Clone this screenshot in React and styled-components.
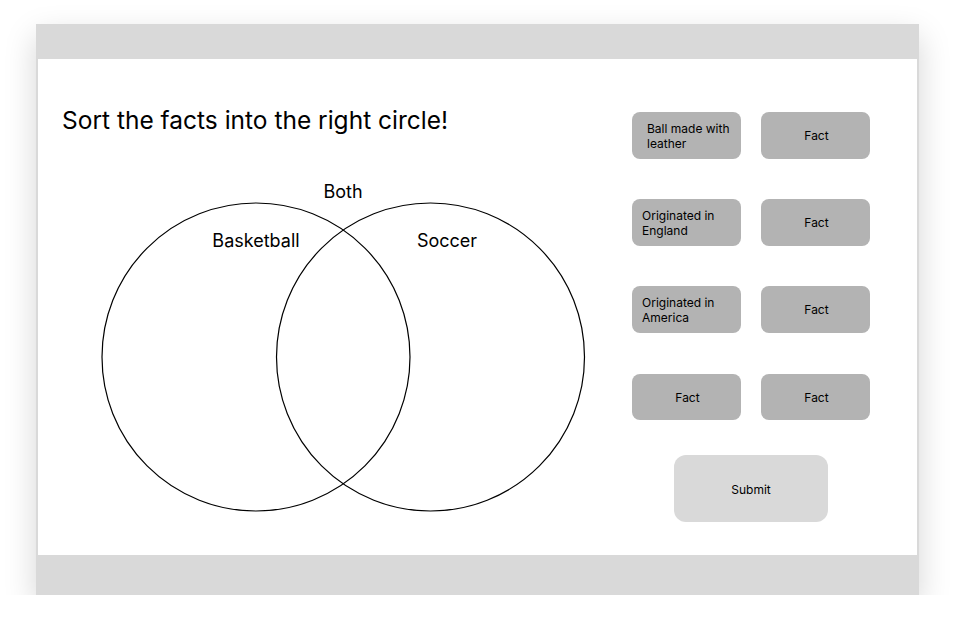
import React from 'react';
import styled, { createGlobalStyle } from 'styled-components';

const GlobalStyle = createGlobalStyle`
  body {
    margin: 0;
    background: #ffffff;
    font-family: Inter, "Noto Sans", "Liberation Sans", sans-serif;
    color: #000;
  }
`;

const Frame = styled.div`
  width: 883px;
  margin: 24px 0 0 36px;
  background: #d9d9d9;
  box-shadow: 0 12px 30px rgba(0, 0, 0, 0.17);
  display: flex;
  flex-direction: column;
`;

const Bar = styled.div`
  height: ${(p) => p.$h}px;
  background: #d9d9d9;
`;

const Main = styled.div`
  height: 496px;
  margin: 0 2px;
  background: #ffffff;
  display: flex;
`;

const LeftCol = styled.div`
  flex: 1;
  padding: 47px 0 0 24px;
  display: flex;
  flex-direction: column;
`;

const Title = styled.h1`
  margin: 0;
  font-size: 24.5px;
  font-weight: 400;
  line-height: 29px;
`;

const Venn = styled.svg`
  display: block;
  margin: 37px 0 0 36px;
  overflow: visible;
  text {
    font-family: Inter, "Noto Sans", "Liberation Sans", sans-serif;
    font-size: 18px;
    fill: #000;
  }
`;

const RightCol = styled.div`
  width: 238px;
  margin-right: 47px;
  padding-top: 53px;
  display: flex;
  flex-direction: column;
  align-items: center;
`;

const FactGrid = styled.div`
  display: grid;
  grid-template-columns: 109px 109px;
  grid-template-rows: 47px 47px 47px 47px;
  column-gap: 20px;
  row-gap: 40px;
`;

const Fact = styled.div`
  background: #b3b3b3;
  border-radius: 8px;
  display: flex;
  align-items: center;
  justify-content: ${(p) => (p.$center ? 'center' : 'flex-start')};
  padding: 2px 8px 0 ${(p) => p.$indent || 10}px;
  font-size: 12px;
  line-height: 14.5px;
  text-align: ${(p) => (p.$center ? 'center' : 'left')};
  &:nth-child(n + 7) {
    margin-top: 1px;
  }
`;

const SubmitButton = styled.button`
  margin-top: 35px;
  padding-top: 3px;
  width: 154px;
  height: 67px;
  border: none;
  border-radius: 12px;
  background: #d9d9d9;
  font-family: inherit;
  font-size: 12px;
  color: #000;
  cursor: pointer;
`;

const facts = [
  { text: 'Ball made with leather', indent: 15 },
  { text: 'Fact', center: true },
  { text: 'Originated in England' },
  { text: 'Fact', center: true },
  { text: 'Originated in America' },
  { text: 'Fact', center: true },
  { text: 'Fact', center: true },
  { text: 'Fact', center: true },
];

export default function App() {
  return (
    <>
      <GlobalStyle />
      <Frame>
        <Bar $h={35} />
        <Main>
          <LeftCol>
            <Title>Sort the facts into the right circle!</Title>
            <Venn width="490" height="342" viewBox="0 0 490 342">
              <circle cx="158" cy="185" r="154" fill="none" stroke="#000" strokeWidth="1.2" />
              <circle cx="332.5" cy="185" r="154" fill="none" stroke="#000" strokeWidth="1.2" />
              <text x="245" y="26" textAnchor="middle">Both</text>
              <text x="158" y="75" textAnchor="middle">Basketball</text>
              <text x="349" y="75" textAnchor="middle">Soccer</text>
            </Venn>
          </LeftCol>
          <RightCol>
            <FactGrid>
              {facts.map((f, i) => (
                <Fact key={i} $center={f.center} $indent={f.indent}>
                  {f.text}
                </Fact>
              ))}
            </FactGrid>
            <SubmitButton>Submit</SubmitButton>
          </RightCol>
        </Main>
        <Bar $h={40} />
      </Frame>
    </>
  );
}
